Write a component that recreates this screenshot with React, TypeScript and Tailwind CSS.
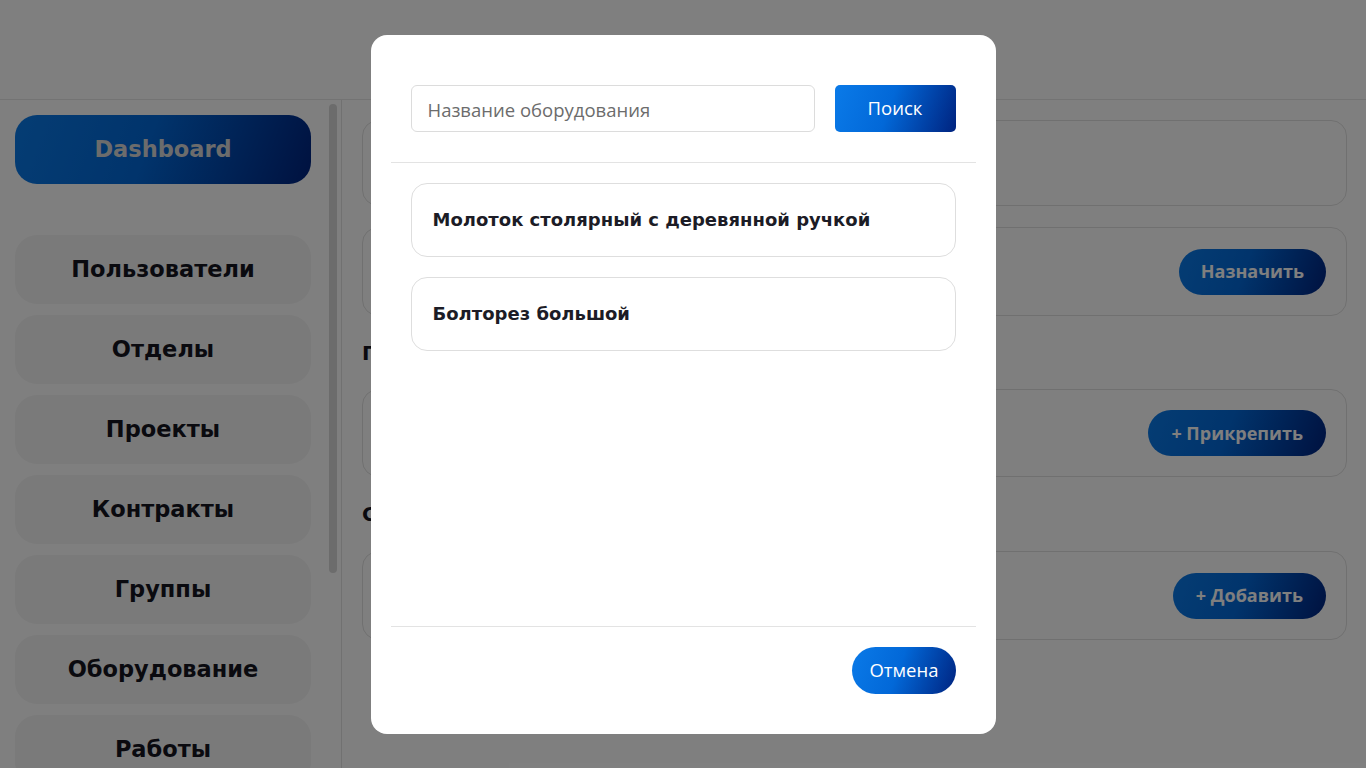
import { useState } from "react";

const navItems = [
  "Пользователи",
  "Отделы",
  "Проекты",
  "Контракты",
  "Группы",
  "Оборудование",
  "Работы",
];

const results = ["Молоток столярный с деревянной ручкой", "Болторез большой"];

const heading = "font-['DejaVu_Sans',sans-serif] font-bold";
const body = "font-['Open_Sans','Noto_Sans',sans-serif]";
const gradient = "bg-[linear-gradient(110deg,#0a7ae8_0%,#0268d8_45%,#00237f_100%)]";

export default function App() {
  const [query, setQuery] = useState("");

  return (
    <div className="relative flex h-screen flex-col overflow-hidden bg-white">
      <header className="h-[100px] shrink-0 border-b border-[#e6e6e6]" />

      <div className="flex min-h-0 flex-1">
        <aside className="relative w-[342px] shrink-0 border-r border-[#e2e2e2] px-[15px] pt-[15px]">
          <div
            className={`flex h-[69px] w-[296px] items-center justify-center rounded-[22px] ${gradient} text-[22.5px] text-[#d8d8d8] ${heading}`}
          >
            Dashboard
          </div>
          <nav className="mt-[51px] flex flex-col gap-[11px]">
            {navItems.map((item) => (
              <div
                key={item}
                className={`flex h-[69px] w-[296px] items-center justify-center rounded-[22px] bg-[#f4f4f4] text-[22.5px] text-[#15151f] ${heading}`}
              >
                {item}
              </div>
            ))}
          </nav>
          <div className="absolute left-[329px] top-[4px] h-[469px] w-[8px] rounded-full bg-[#d8d8d8]" />
        </aside>

        <main className="flex flex-1 flex-col gap-[21px] pl-[20px] pr-[19px] pt-[20px]">
          <div className="h-[86px] shrink-0 rounded-[16px] border border-[#e0e0e0]" />
          <div className="flex h-[89px] shrink-0 items-center justify-end rounded-[16px] border border-[#e0e0e0] px-[20px]">
            <button
              type="button"
              className={`h-[46px] rounded-full px-[22px] text-[18px] font-bold text-white ${gradient} ${body}`}
            >
              Назначить
            </button>
          </div>
          <h2 className={`h-[31px] shrink-0 text-[20px] leading-[32px] text-[#15151f] ${heading}`}>
            Прикреплённые документы
          </h2>
          <div className="flex h-[88px] shrink-0 items-center justify-end rounded-[16px] border border-[#e0e0e0] px-[20px]">
            <button
              type="button"
              className={`h-[46px] rounded-full px-[23px] text-[18px] font-bold text-white ${gradient} ${body}`}
            >
              + Прикрепить
            </button>
          </div>
          <h2 className={`h-[32px] shrink-0 text-[20px] leading-[32px] text-[#15151f] ${heading}`}>
            Сотрудники
          </h2>
          <div className="flex h-[89px] shrink-0 items-center justify-end rounded-[16px] border border-[#e0e0e0] px-[20px]">
            <button
              type="button"
              className={`h-[46px] rounded-full px-[23px] text-[18px] font-bold text-white ${gradient} ${body}`}
            >
              + Добавить
            </button>
          </div>
        </main>
      </div>

      {/* modal */}
      <div className="absolute inset-0 flex items-center justify-center bg-black/50">
        <div className="flex h-[699px] w-[625px] flex-col rounded-[16px] bg-white px-[20px]">
          <div className="flex items-center gap-[20px] border-b border-[#e3e3e3] px-[20px] pb-[30px] pt-[50px]">
            <input
              value={query}
              onChange={(e) => setQuery(e.target.value)}
              placeholder="Название оборудования"
              className={`h-[47px] flex-1 rounded-[6px] border border-[#dcdcdc] px-[16px] pt-[3px] text-[18.5px] text-[#333] outline-none placeholder:text-[#6c6c6c] ${body}`}
            />
            <button
              type="button"
              className={`h-[47px] w-[121px] rounded-[5px] text-[18.5px] text-white ${gradient} ${body}`}
            >
              Поиск
            </button>
          </div>

          <div className="flex flex-1 flex-col gap-[20px] px-[20px] pt-[20px]">
            {results.map((r) => (
              <div
                key={r}
                className={`flex h-[74px] items-center rounded-[16px] border border-[#dedede] px-[21px] text-[18px] text-[#1c1c26] ${heading}`}
              >
                {r}
              </div>
            ))}
          </div>

          <div className="flex justify-end border-t border-[#e3e3e3] px-[20px] pb-[40px] pt-[20px]">
            <button
              type="button"
              className={`h-[47px] rounded-full px-[17px] text-[18.5px] text-white ${gradient} ${body}`}
            >
              Отмена
            </button>
          </div>
        </div>
      </div>
    </div>
  );
}
